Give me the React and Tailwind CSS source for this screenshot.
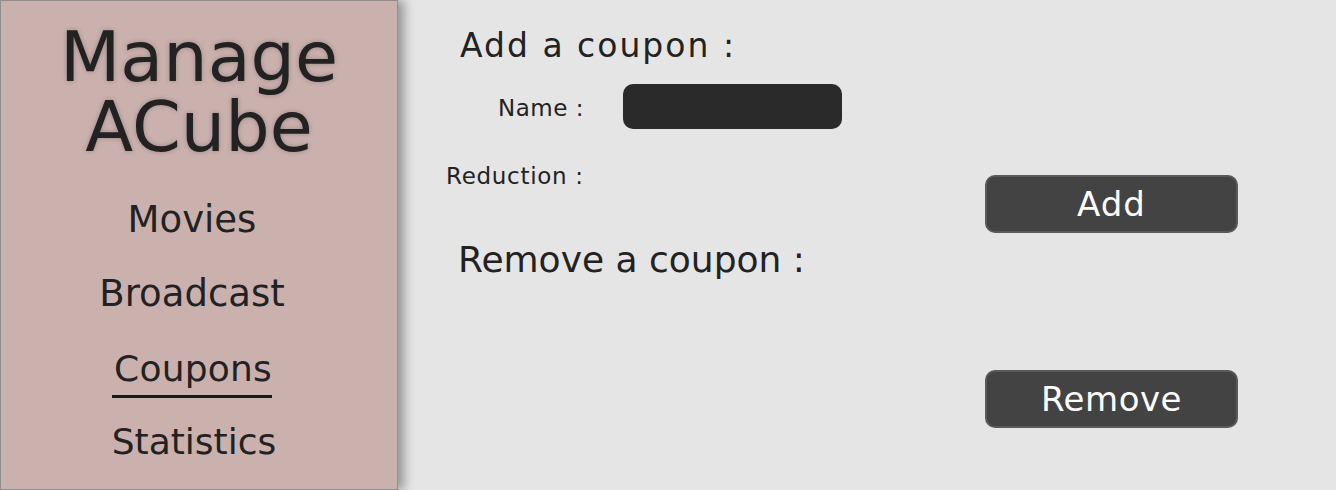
export default function App() {
  const font = { fontFamily: '"DejaVu Sans", sans-serif' }

  return (
    <div className="flex h-[490px] w-[1336px] overflow-hidden bg-[#e5e5e5] text-[#222]" style={font}>
      <aside className="relative z-10 flex h-[490px] w-[398px] shrink-0 flex-col items-center border border-[#8f8f8f] bg-[#cbb1ae] shadow-[6px_0_10px_rgba(0,0,0,0.35)]">
        <h1 className="mt-[21px] flex flex-col items-center text-[70px] leading-none [text-shadow:0_0_5px_rgba(0,0,0,0.25)]">
          <span className="block h-[70px]">Manage</span>
          <span className="block">ACube</span>
        </h1>
        <nav className="flex flex-col items-center pr-[14px] text-[37px] leading-none">
          <a className="mt-[39px]">Movies</a>
          <a className="mt-[37px]">Broadcast</a>
          <a className="mt-[39px] inline-block border-b-[3px] border-[#1c1818] pb-[8px] pl-[2px] text-[36px] tracking-[0.2px]">Coupons</a>
          <a className="mt-[26px] pl-[4px] text-[36px]">Statistics</a>
        </nav>
      </aside>

      <main className="flex flex-1">
        <div className="flex w-[520px] flex-col">
          <h2 className="ml-[62px] mt-[29px] text-[33px] leading-none tracking-[2px]">Add a coupon :</h2>
          <div className="mt-[22px] flex items-center">
            <label className="ml-[100px] w-[125px] pt-[3px] text-[23px] leading-none tracking-[0.5px]">Name :</label>
            <div className="h-[45px] w-[219px] rounded-[10px] bg-[#2a2a2a]" />
          </div>
          <label className="ml-[48px] mt-[36px] text-[23px] leading-none tracking-[0.7px]">Reduction :</label>
          <h2 className="ml-[60px] mt-[54px] text-[36px] leading-none">Remove a coupon :</h2>
        </div>
        <div className="ml-[67px] flex flex-col pt-[175px]">
          <button className="flex h-[58px] w-[253px] items-center justify-center rounded-[10px] border-2 border-[#5a5a5a] bg-[#434343] text-[34px] leading-none tracking-[1px] text-white">
            Add
          </button>
          <button className="mt-[137px] flex h-[58px] w-[253px] items-center justify-center rounded-[10px] border-2 border-[#5a5a5a] bg-[#434343] text-[34px] leading-none tracking-[0.5px] text-white">
            Remove
          </button>
        </div>
      </main>
    </div>
  )
}
